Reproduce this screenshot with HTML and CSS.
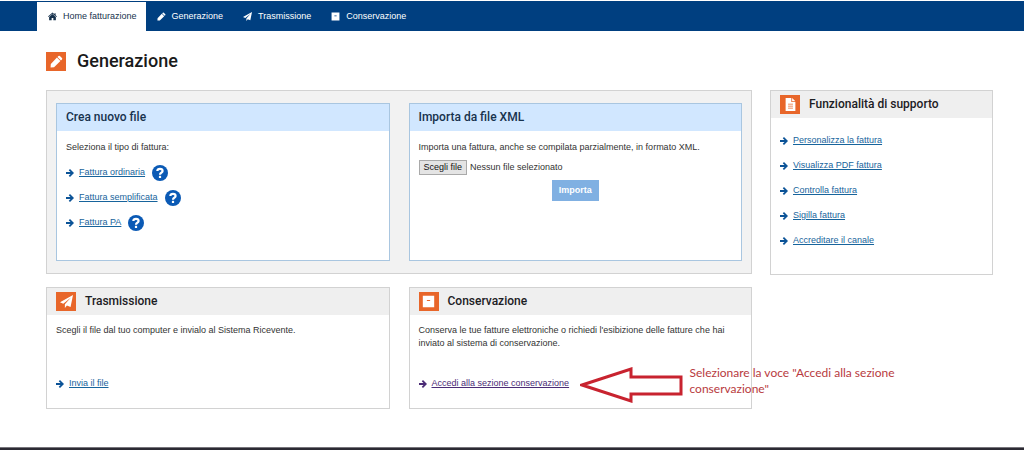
FILE: index.html
```html
<!DOCTYPE html>
<html lang="it">
<head>
<meta charset="utf-8">
<meta name="viewport" content="width=device-width, initial-scale=1">
<title>Generazione</title>
<link rel="stylesheet" href="styles.css">
</head>
<body>
<svg class="sprite" aria-hidden="true">
  <symbol id="home" viewBox="0 0 16 16"><path d="M8 1 0 8l1 1 7-6 7 6 1-1-2.500-2.200V2h-2v2z"/><path d="M8 3.700 2 9v5.500h4.500v-4h3v4H14V9z"/></symbol>
  <symbol id="pencil" viewBox="0 0 16 16"><path d="M12.200 1.300 14.700 3.800q.9.900 0 1.800L13.500 6.800 9.200 2.500 10.400 1.300q.9-.9 1.800 0zM8.500 3.200l4.300 4.300L5 15 .7 15.300 1 11z"/></symbol>
  <symbol id="plane" viewBox="0 0 16 16"><path d="M16 0 0 9l4 1.700L13.500 3 6 11.500V16l2.500-3 4.500 1.800z"/></symbol>
  <symbol id="box" viewBox="0 0 16 16"><path fill-rule="evenodd" d="M1 1h14v14H1zm5 5v1.500h4V6z"/></symbol>
  <symbol id="doc" viewBox="0 0 16 16"><path fill-rule="evenodd" d="M2 0h7v5h5v11H2zm8 0 4 4h-4zM5 7v1h6V7zm0 2.500v1h6v-1zM5 12v1h6v-1z"/></symbol>
  <symbol id="arrow" viewBox="0 0 16 16"><path d="m8 0 8 8-8 8-2.500-2.500L9 10H0V6h9L5.500 2.500z"/></symbol>
  <symbol id="help" viewBox="0 0 16 16"><circle cx="8" cy="8" r="8"/><path d="M5.300 6Q5.500 3.800 8 3.800T10.600 6Q10.600 7 9.300 7.700 8 8.400 8 9.700" fill="none" stroke="#fff" stroke-width="2.200"/><path d="M6.900 10.800h2.200V13H6.900z" fill="#fff"/></symbol>
</svg>
<nav class="nav" aria-label="Principale">
  <a class="nav-item active" href="#home" aria-current="page"><svg class="icon-small"><use href="#home"/></svg>Home fatturazione</a>
  <a class="nav-item" href="#generazione"><svg class="icon-small"><use href="#pencil"/></svg>Generazione</a>
  <a class="nav-item" href="#trasmissione"><svg class="icon-small"><use href="#plane"/></svg>Trasmissione</a>
  <a class="nav-item" href="#conservazione"><svg class="icon-small"><use href="#box"/></svg>Conservazione</a>
</nav>
<main class="page">
  <h1 class="page-title" id="generazione"><span class="badge"><svg><use href="#pencil"/></svg></span>Generazione</h1>
  <div class="layout">
    <div class="content">
      <div class="group">
        <section class="panel blue">
          <h2 class="panel-title">Crea nuovo file</h2>
          <div class="panel-body">
            <p>Seleziona il tipo di fattura:</p>
            <ul class="links">
              <li><svg class="arrow"><use href="#arrow"/></svg><a href="#ordinaria">Fattura ordinaria</a><button class="help" type="button" aria-label="Aiuto fattura ordinaria"><svg><use href="#help"/></svg></button></li>
              <li><svg class="arrow"><use href="#arrow"/></svg><a href="#semplificata">Fattura semplificata</a><button class="help" type="button" aria-label="Aiuto fattura semplificata"><svg><use href="#help"/></svg></button></li>
              <li><svg class="arrow"><use href="#arrow"/></svg><a href="#pa">Fattura PA</a><button class="help" type="button" aria-label="Aiuto fattura PA"><svg><use href="#help"/></svg></button></li>
            </ul>
          </div>
        </section>
        <section class="panel blue">
          <h2 class="panel-title">Importa da file XML</h2>
          <form class="panel-body">
            <p>Importa una fattura, anche se compilata parzialmente, in formato XML.</p>
            <div class="file-row">
              <input class="file-input" type="file" id="xml" accept=".xml">
              <label class="file-button" for="xml">Scegli file</label>
              <span>Nessun file selezionato</span>
            </div>
            <button class="import" type="button">Importa</button>
          </form>
        </section>
      </div>
      <div class="row">
        <section class="panel" id="trasmissione">
          <h2 class="panel-title"><span class="badge"><svg><use href="#plane"/></svg></span>Trasmissione</h2>
          <div class="panel-body spread">
            <p>Scegli il file dal tuo computer e invialo al Sistema Ricevente.</p>
            <div class="link-row"><svg class="arrow"><use href="#arrow"/></svg><a href="#invia">Invia il file</a></div>
          </div>
        </section>
        <section class="panel" id="conservazione">
          <h2 class="panel-title"><span class="badge"><svg><use href="#box"/></svg></span>Conservazione</h2>
          <div class="panel-body spread">
            <p>Conserva le tue fatture elettroniche o richiedi l'esibizione delle fatture che hai inviato al sistema di conservazione.</p>
            <div class="link-row visited"><svg class="arrow"><use href="#arrow"/></svg><a href="#accedi">Accedi alla sezione conservazione</a>
              <div class="note">
                <svg class="note-arrow" viewBox="0 0 104 36"><path d="M2 18 51 2v8h50v17H51v7z"/></svg>
                <p class="note-text">Selezionare la voce "Accedi alla sezione conservazione"</p>
              </div>
            </div>
          </div>
        </section>
      </div>
    </div>
    <aside class="panel support">
      <h2 class="panel-title"><span class="badge"><svg><use href="#doc"/></svg></span>Funzionalità di supporto</h2>
      <ul class="links">
        <li><svg class="arrow"><use href="#arrow"/></svg><a href="#personalizza">Personalizza la fattura</a></li>
        <li><svg class="arrow"><use href="#arrow"/></svg><a href="#visualizza">Visualizza PDF fattura</a></li>
        <li><svg class="arrow"><use href="#arrow"/></svg><a href="#controlla">Controlla fattura</a></li>
        <li><svg class="arrow"><use href="#arrow"/></svg><a href="#sigilla">Sigilla fattura</a></li>
        <li><svg class="arrow"><use href="#arrow"/></svg><a href="#accreditare">Accreditare il canale</a></li>
      </ul>
    </aside>
  </div>
</main>
<footer class="footer"></footer>
</body>
</html>
```

FILE: styles.css
```css
* { box-sizing: border-box; }
body {
  margin: 0;
  min-height: 100vh;
  display: flex;
  flex-direction: column;
  background: #fff;
  color: #333;
  font: 9px/13px "Liberation Sans", Arial, sans-serif;
}
h1, h2, p, ul { margin: 0; padding: 0; }
ul { list-style: none; }
svg { display: block; fill: currentColor; }
.sprite { position: absolute; width: 0; height: 0; }

.nav {
  display: flex;
  margin-top: 1px;
  padding: 1px 37px 0;
  background: #003f80;
}
.nav-item {
  display: flex;
  align-items: center;
  gap: 6px;
  height: 29px;
  padding: 0 9px 0 11px;
  color: #fff;
  text-decoration: none;
}
.nav-item.active { background: #fff; color: #17324d; }
.icon-small { width: 9px; height: 9px; }

.page { flex: 1; padding: 18px 31px 38px 46px; }
.page-title {
  display: flex;
  align-items: center;
  gap: 11px;
  margin-bottom: 17px;
  color: #1a1a1a;
  font: 500 18px/24px Roboto, sans-serif;
}
.badge {
  display: grid;
  place-items: center;
  width: 20px;
  height: 19px;
  background: #e8662a;
  color: #fff;
}
.badge svg { width: 13px; height: 13px; }

.layout {
  display: grid;
  grid-template-columns: 706fr 223fr;
  gap: 18px;
  align-items: start;
}
.content { display: grid; gap: 13px; }
.group, .row {
  display: grid;
  grid-template-columns: 1fr 1fr;
  gap: 19px;
}
.group {
  padding: 12px 9px;
  border: 1px solid #d2d2d2;
  background: #f2f2f2;
}
.panel {
  display: flex;
  flex-direction: column;
  min-width: 0;
  border: 1px solid #d2d2d2;
  background: #fff;
}
.row .panel { min-height: 122px; }
.group .panel { min-height: 158px; }
.support { min-height: 185px; }
.panel-title {
  display: flex;
  align-items: center;
  gap: 9px;
  padding: 0 9px;
  background: #efefef;
  color: #1c2024;
  font: 500 12px/27px Roboto, sans-serif;
}
.blue { border-color: #a9c6e0; }
.blue .panel-title { background: #d1e7ff; color: #17324d; }
.panel-body { padding: 9px; }
.group .panel-body { padding-top: 10px; }
.spread {
  flex: 1;
  display: flex;
  flex-direction: column;
  justify-content: space-between;
  padding-bottom: 18px;
}
a { color: #17649c; }
.links li, .link-row { display: flex; align-items: center; }
.links li { height: 25px; }
.group .links { padding-top: 6px; }
.support .links { padding: 10px 9px; }
.arrow { width: 8px; height: 8px; margin-right: 5px; color: #0b5397; }
.visited, .visited a, .visited .arrow { color: #4b2c76; }
.help {
  margin-left: 7px;
  padding: 0;
  border: 0;
  background: none;
  color: #0b5ab5;
}
.help svg { width: 16px; height: 16px; }

.file-row {
  display: flex;
  align-items: center;
  gap: 3px;
  margin-top: 6px;
}
.file-input {
  position: absolute;
  width: 1px;
  height: 1px;
  opacity: 0;
}
.file-button {
  padding: 0 4px;
  border: 1px solid #a9a9a9;
  background: #e4e4e4;
  color: #111;
}
.import {
  display: block;
  height: 21px;
  margin: 5px auto 0;
  padding: 0 7px;
  border: 0;
  background: #80b0e2;
  color: #fff;
  font: bold 9px/21px "Liberation Sans", Arial, sans-serif;
}

.link-row { position: relative; }
.note {
  position: absolute;
  left: 161px;
  top: -12px;
  display: flex;
  gap: 6px;
  width: 332px;
}
.note-arrow { flex: none; width: 104px; height: 36px; margin-top: 2px; }
.note-arrow path { fill: #fff; stroke: #c8232f; stroke-width: 3; }
.note-text {
  color: #b83a40;
  font: 12px/16px Lato, sans-serif;
}
.footer { height: 3px; border-top: 1px solid #77757b; background: #2c2a33; }
```
